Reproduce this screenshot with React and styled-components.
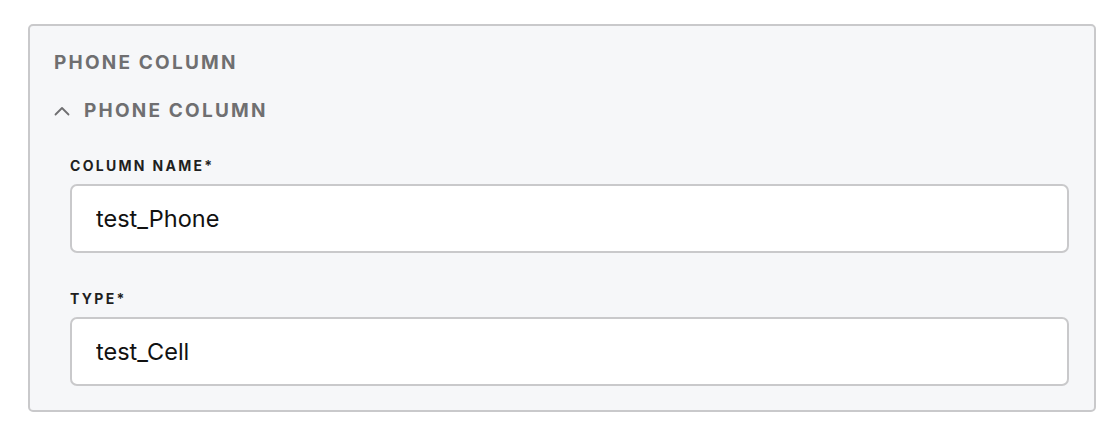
import React from 'react'
import styled, { createGlobalStyle } from 'styled-components'

const Global = createGlobalStyle`
	body {
		margin: 0;
		background: #ffffff;
		font-family: Inter, 'Liberation Sans', sans-serif;
	}
`

const Page = styled.div`
	padding: 24px 20px 0 28px;
`

const Card = styled.section`
	width: 1068px;
	box-sizing: border-box;
	background: #f6f7f9;
	border: 2px solid #c9c9cb;
	border-radius: 5px;
	padding: 25px 25px 24px 24px;
`

const Heading = styled.h2`
	margin: 0;
	font-size: 19px;
	font-weight: 700;
	letter-spacing: 2.2px;
	color: #6f6f71;
	line-height: 24px;
`

const Toggle = styled.button`
	display: flex;
	align-items: center;
	gap: 14px;
	margin: 24px 0 0;
	padding: 0;
	border: 0;
	background: none;
	font-family: inherit;
	font-size: 19px;
	font-weight: 700;
	letter-spacing: 2.2px;
	color: #6f6f71;
	line-height: 24px;
	cursor: pointer;
`

const Body = styled.div`
	display: flex;
	flex-direction: column;
	gap: 38px;
	padding: 35px 0 0 16px;
`

const Field = styled.label`
	display: flex;
	flex-direction: column;
	gap: 10px;
`

const Label = styled.span`
	font-size: 14px;
	font-weight: 700;
	letter-spacing: 2.3px;
	color: #1f1f21;
	line-height: 16px;
`

const Input = styled.input`
	height: 69px;
	box-sizing: border-box;
	border: 2px solid #c9c9cb;
	border-radius: 7px;
	background: #ffffff;
	padding: 0 24px;
	font-family: inherit;
	font-size: 23.5px;
	color: #111;
	outline: none;
`

function Chevron() {
	return (
		<svg width='16' height='10' viewBox='0 0 16 10' fill='none'>
			<path d='M1.5 8.5L8 2L14.5 8.5' stroke='#6f6f71' strokeWidth='1.8' strokeLinecap='round' strokeLinejoin='round' />
		</svg>
	)
}

export default function App() {
	return (
		<Page>
			<Global />
			<Card>
				<Heading>PHONE COLUMN</Heading>
				<Toggle type='button'>
					<Chevron />
					PHONE COLUMN
				</Toggle>
				<Body>
					<Field>
						<Label>COLUMN NAME*</Label>
						<Input defaultValue='test_Phone' />
					</Field>
					<Field>
						<Label>TYPE*</Label>
						<Input defaultValue='test_Cell' />
					</Field>
				</Body>
			</Card>
		</Page>
	)
}
